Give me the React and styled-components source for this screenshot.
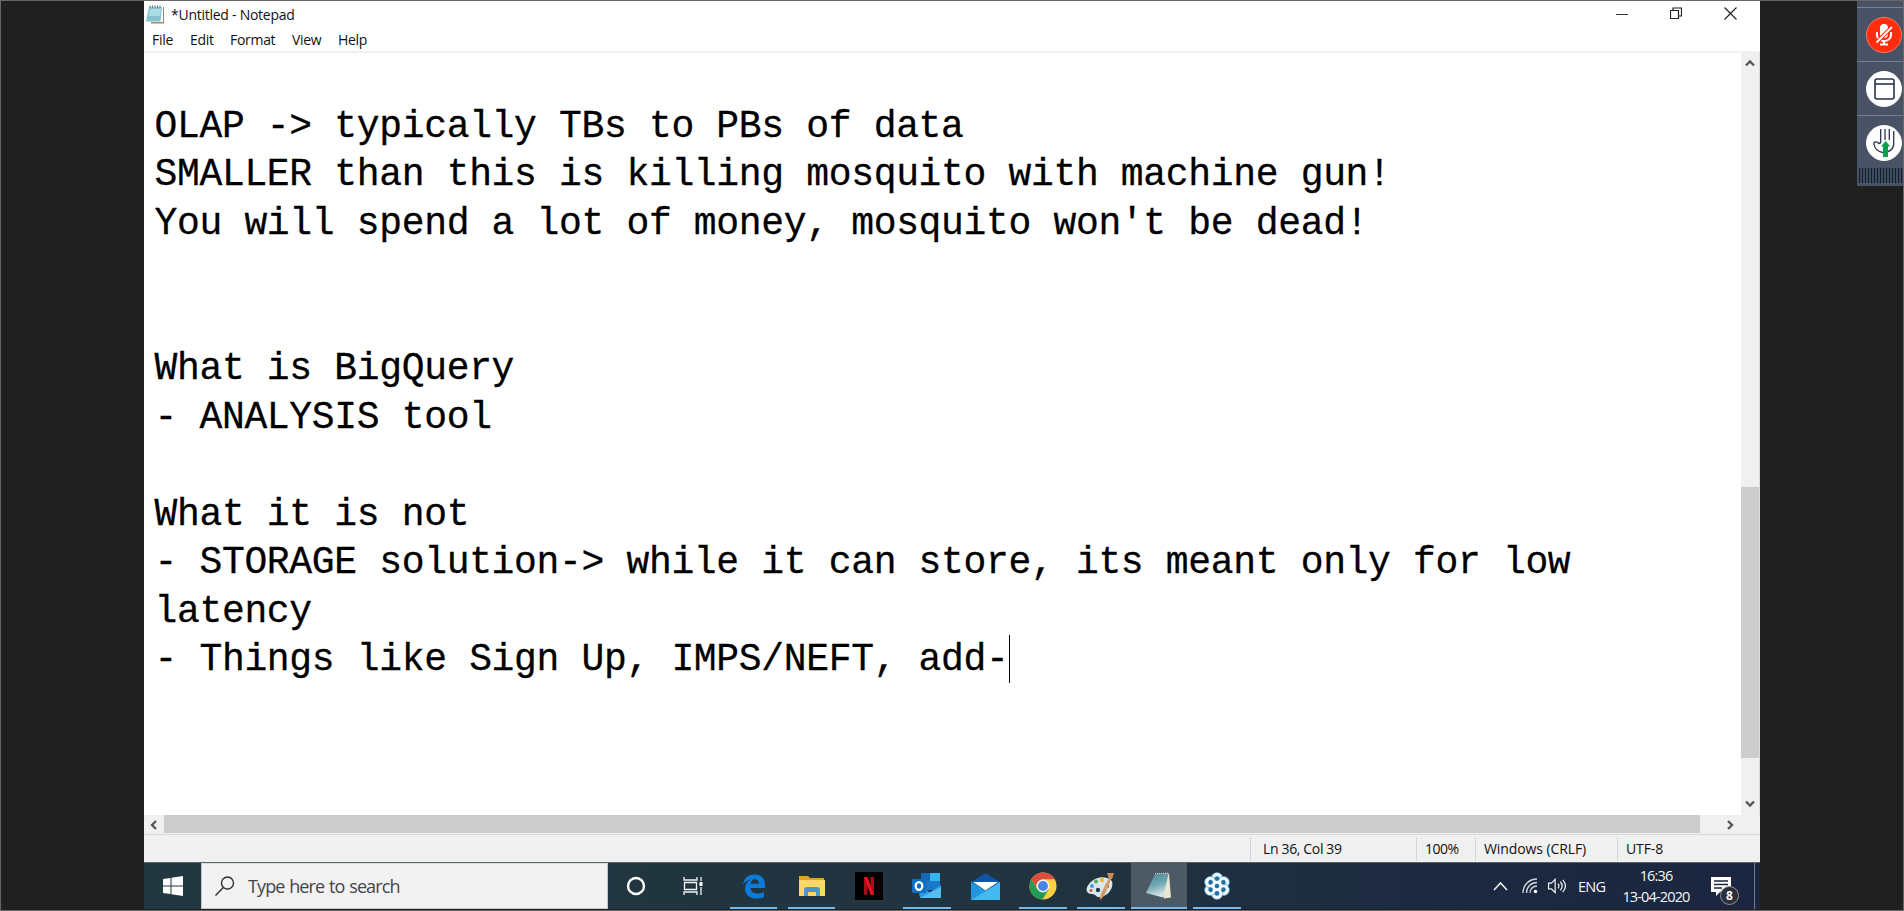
import React from 'react';
import styled, { createGlobalStyle } from 'styled-components';

const Global = createGlobalStyle`
  *{box-sizing:border-box}
  html,body,#root{margin:0;height:100%;overflow:hidden}
  body{background:#202020;font-family:"Open Sans","Noto Sans",sans-serif;color:#111}
`;

const Screen = styled.div`
  position:relative;width:1904px;height:911px;display:flex;justify-content:flex-start;
  padding-left:143px;background:#202020;border:1px solid #666;overflow:hidden;
`;
const Desktop = styled.div`width:1616px;height:908px;display:flex;flex-direction:column;`;
const Notepad = styled.div`height:861px;display:flex;flex-direction:column;background:#fff;`;
const TitleBar = styled.div`height:27px;display:flex;align-items:center;padding-left:2px;font-size:14px;`;
const Title = styled.span`margin-left:6px;letter-spacing:-0.26px;flex:1;white-space:nowrap;`;
const WindowButtons = styled.div`display:flex;gap:42px;padding-right:23px;height:16px;`;
const MenuBar = styled.div`
  height:23px;display:flex;align-items:center;padding:0 0 1px 8px;font-size:14px;
`;
const MenuItem = styled.span`width:${p => p.$w}px;letter-spacing:-0.3px;white-space:nowrap;`;
const Editor = styled.div`height:764px;display:flex;border-top:2px solid #eef0f3;`;
const TextArea = styled.div`
  flex:1;padding:50px 0 0 10.5px;white-space:pre;
  font-family:"Liberation Mono",monospace;font-size:38px;line-height:48.46px;letter-spacing:-0.33px;
  color:#000;-webkit-text-stroke:0.3px #000;
`;
const Line = styled.div`height:48.46px;display:flex;`;
const Caret = styled.i`width:1px;height:48px;margin-top:-1px;background:#000;`;
const VScroll = styled.div`
  width:19px;background:#f0f0f0;display:flex;flex-direction:column;align-items:center;
  padding:5px 0 6px;border-right:1px solid #dcdcdc;
`;
const VThumb = styled.div`width:18px;height:271px;margin:419px 0 auto;background:#cdcdcd;`;
const HScroll = styled.div`height:20px;background:#f0f0f0;display:flex;align-items:center;border-bottom:1px solid #d7d7d7;`;
const HThumb = styled.div`width:1536px;height:18px;background:#cdcdcd;margin:0 25px 1px 5px;`;
const ArrowPad = styled.div`width:15px;padding-left:5px;display:flex;`;
const StatusBar = styled.div`height:27px;background:#f0f0f0;display:flex;justify-content:flex-end;font-size:14px;`;
const StatusCell = styled.div`
  width:${p => p.$w}px;padding-left:${p => p.$pad}px;margin-top:2px;height:24px;line-height:23px;
  border-left:1px solid #d5d5d5;letter-spacing:${p => p.$ls}px;white-space:nowrap;
`;
const Taskbar = styled.div`
  height:47px;display:flex;background:linear-gradient(90deg,#213841,#21333f 58%,#1d2b40 75%,#1b2540);
  border-top:1px solid #56666c;
`;
const Start = styled.div`width:57px;display:flex;align-items:center;justify-content:center;`;
const Search = styled.div`
  width:407px;background:#f2f2f2;border:1px solid #c6c6c6;border-top-color:#ddd;display:flex;align-items:center;padding-left:13px;
  font-size:18px;letter-spacing:-0.9px;word-spacing:1px;color:#454545;gap:13px;white-space:nowrap;
`;
const Apps = styled.div`display:flex;`;
const AppButton = styled.div`
  width:${p => p.$w || 58}px;height:46px;display:flex;align-items:center;justify-content:center;
  background:${p => (p.$active ? '#4c5a66' : 'transparent')};
  box-shadow:${p => (p.$open ? 'inset 0 -2px #76b9ed' : 'none')};
  svg{display:block}
`;
const Tray = styled.div`margin-left:auto;display:flex;align-items:center;color:#f4f6f8;`;
const TrayIcon = styled.div`width:${p => p.$w}px;display:flex;`;
const Lang = styled.span`width:36px;font-size:14.5px;letter-spacing:-0.7px;`;
const Clock = styled.div`
  width:84px;margin-right:13px;display:flex;flex-direction:column;align-items:center;line-height:21px;
  font-size:14.5px;letter-spacing:-0.85px;white-space:nowrap;
`;
const Notice = styled.div`width:43px;position:relative;display:flex;`;
const Badge = styled.b`
  position:absolute;left:9px;top:9px;width:19px;height:19px;border-radius:50%;background:#2b3038;border:1px solid #8b9098;
  font-size:12px;line-height:17px;text-align:center;
`;
const ShowDesk = styled.div`width:6px;height:46px;border-left:1px solid #75808f;`;
const Panel = styled.div`
  position:absolute;right:-1px;top:-1px;width:47px;height:186px;background:#4a5266;display:flex;flex-direction:column;
  padding-top:7px;
`;
const PanelCell = styled.div`height:54px;border-top:1px solid #738099;padding:9px 0 0 9px;`;
const Round = styled.div`
  width:36px;height:36px;border-radius:50%;background:${p => p.$bg || '#fff'};
  border:1px solid ${p => p.$edge || '#fff'};display:flex;align-items:center;justify-content:center;
  svg{flex:none}
`;
const Grip = styled.div`height:15px;margin:-1px 1px 0 2px;background:repeating-linear-gradient(90deg,#111d2b 0 1px,#3f4c60 1px 3px);`;

const Chevron = ({ d }) => (
  <svg width="10" height="10" viewBox="0 0 10 10"><path d={d} fill="none" stroke="#555" strokeWidth="2.3" /></svg>
);

const PadIcon = () => (
  <svg width="19" height="20" viewBox="0 0 19 20">
    <path d="M4 2h14v16.500H5z" fill="#9b8a72" /><path d="M4 2h13v15H3z" fill="#fff" />
    <path d="M3 2h13l-1.500 14.500H0z" fill="#86c3d0" /><path d="M4 4h11l-1 7H3z" fill="#a9dce3" />
    <path d="M4 2.500V.5M6.500 2.500V.5M9 2.500V.5M11.500 2.500V.5M14 2.500V.5" stroke="#54666c" />
  </svg>
);

const Edge = () => (
  <svg width="24" height="25" viewBox="0 0 24 25">
    <path d="M1 11C2 4 6 .5 12.500.5 19.500.5 23 5 23 11v3H8.500c.3 4 3.500 5.600 7 5.600 2.600 0 4.700-.7 6.500-1.700v5c-2 1.100-4.700 1.700-7.500 1.700C7.500 24.600 3 20.500 3 14.500c0-4 2-7 5.500-8.700C4.500 6.500 2 8.500 1 11zM8.700 9.800H17C17 7 15.500 5.200 12.900 5.200c-2.400 0-4 1.700-4.200 4.600z" fill="#0a7bdb" />
  </svg>
);
const Folder = () => (
  <svg width="26" height="22" viewBox="0 0 26 22">
    <path d="M0 1h9l2 2h14v5H0z" fill="#e3a32a" /><path d="M1 5h25v16H0V6z" fill="#fbd866" />
    <path d="M5 21v-6q0-3 3-3h10q3 0 3 3v6h-4v-4H9v4z" fill="#4d96c9" />
  </svg>
);
const Netflix = () => (
  <svg width="28" height="28" viewBox="0 0 28 28">
    <rect width="28" height="28" fill="#000" /><path d="M9 5h3.500v17.500L9 23zM15.500 5H19v18l-3.500-.5z" fill="#a80c16" />
    <path d="M9 5h3.500L19 23l-3.500-.5z" fill="#e51420" />
  </svg>
);
const Outlook = () => (
  <svg width="30" height="28" viewBox="0 0 30 28">
    <path d="M9 1h19v17H9z" fill="#1779c9" /><path d="M9 1h9v8H9z" fill="#1467b3" /><path d="M18 1h10v8H18z" fill="#36b4ee" />
    <path d="M6 14l12 6 11-7v13H8z" fill="#2a9be0" /><path d="M8 26l21-11v11z" fill="#55bdf0" />
    <rect y="7" width="14" height="14" rx="1" fill="#0c6fc4" /><ellipse cx="7" cy="14" rx="3.300" ry="3.900" fill="none" stroke="#fff" strokeWidth="2.300" />
  </svg>
);
const Mail = () => (
  <svg width="29" height="27" viewBox="0 0 29 27">
    <path d="M0 9L14.500 0 29 9v5H0z" fill="#1055a3" />
    <path d="M0 9l29 18H0z" fill="#2d9ee5" /><path d="M29 9v18H0z" fill="#43b9f2" /><path d="M0 9l14.500 9L0 27z" fill="#2196dc" /><path d="M2 9h25l-12.500 8.500z" fill="#fff" />
  </svg>
);
const Chrome = () => (
  <svg width="28" height="28" viewBox="0 0 28 28">
    <circle cx="14" cy="14" r="13.500" fill="#fdd046" />
    <path d="M2.300 7.200A13.500 13.500 0 0 1 25.700 7.300H14a6.700 6.700 0 0 0-5.800 10z" fill="#dd4c40" />
    <path d="M2.300 7.200A13.500 13.500 0 0 0 13.500 27.500l6.300-10.200H8.200z" fill="#239b57" />
    <circle cx="14" cy="14" r="6.400" fill="#f1f1f1" /><circle cx="14" cy="14" r="4.900" fill="#4685e8" />
  </svg>
);
const Paint = () => (
  <svg width="30" height="28" viewBox="0 0 30 28">
    <path d="M3 12C8 5 19 3 25 8c4 5-1 15-10 17-5 1-5-3-9-3-6 0-7-5-3-10z" fill="#dae7ee" />
    <circle cx="6" cy="14" r="2" fill="#4b9ed4" /><circle cx="10" cy="9.500" r="2" fill="#55aa54" /><circle cx="16" cy="8" r="2.200" fill="#edbd35" />
    <circle cx="21" cy="14" r="2.200" fill="#d75545" /><circle cx="12" cy="18" r="2.200" fill="#253746" /><circle cx="5" cy="18.500" r="1.600" fill="#d75545" />
    <path d="M14 28c0-7 3-10 9-22l2 1c-5 13-6 17-11 21z" fill="#d49b65" /><path d="M21 1l7 0-2 6-3 0z" fill="#c98d59" />
  </svg>
);
const TaskPad = () => (
  <svg width="28" height="28" viewBox="0 0 28 28">
    <defs>
      <linearGradient id="pad" x1="0" y1="0" x2="0.3" y2="1"><stop offset="0" stopColor="#4e8993" /><stop offset=".55" stopColor="#6fa9b2" /><stop offset="1" stopColor="#d5e3e3" /></linearGradient>
    </defs>
    <path d="M10 2l14-.5 2 24-7 1z" fill="#e9e5d4" /><path d="M10 2l13.500 0-5.500 23.500L1 21z" fill="url(#pad)" />
    <path d="M10 1.700l14-.5" stroke="#ddd" strokeDasharray="1 1" />
  </svg>
);
const petals = [0, 60, 120, 180, 240, 300];
const Flower = () => (
  <svg width="28" height="28" viewBox="0 0 28 28">
    {petals.map(a => <circle key={a} cx="14" cy="6.300" r="5.700" fill="#f2fbff" stroke="#3e9ecb" strokeWidth=".6" transform={`rotate(${a} 14 14)`} />)}
    <circle cx="14" cy="14" r="7" fill="#f2fbff" />
    {petals.map(a => <ellipse key={a} cx="14" cy="6.600" rx="2.400" ry="2.300" fill="#27719f" transform={`rotate(${a} 14 14)`} />)}
    <circle cx="14" cy="14" r="2.300" fill="#27719f" />
  </svg>
);

const lines = [
  'OLAP -> typically TBs to PBs of data',
  'SMALLER than this is killing mosquito with machine gun!',
  "You will spend a lot of money, mosquito won't be dead!",
  '', '',
  'What is BigQuery',
  '- ANALYSIS tool',
  '',
  'What it is not',
  '- STORAGE solution-> while it can store, its meant only for low',
  'latency',
  '- Things like Sign Up, IMPS/NEFT, add-',
];

export default function App() {
  return (
    <>
      <Global />
      <Screen>
        <Desktop>
          <Notepad>
            <TitleBar>
              <PadIcon />
              <Title>*Untitled - Notepad</Title>
              <WindowButtons>
                <svg width="12" height="13"><path d="M0 7.500h12" stroke="#333" /></svg>
                <svg width="12" height="13"><path d="M.5 3.500h8v8h-8zM3 3V1h8.500v8H9" fill="none" stroke="#222" strokeWidth="1.200" /></svg>
                <svg width="13" height="13"><path d="M.5.500l12 12M12.500.500l-12 12" stroke="#222" strokeWidth="1.200" /></svg>
              </WindowButtons>
            </TitleBar>
            <MenuBar>
              <MenuItem $w={38}>File</MenuItem>
              <MenuItem $w={40}>Edit</MenuItem>
              <MenuItem $w={62}>Format</MenuItem>
              <MenuItem $w={46}>View</MenuItem>
              <MenuItem $w={40}>Help</MenuItem>
            </MenuBar>
            <Editor>
              <TextArea>
                {lines.map((t, i) => <Line key={i}>{t}{i === lines.length - 1 && <Caret />}</Line>)}
              </TextArea>
              <VScroll>
                <Chevron d="M1 7.500L5 3.500 9 7.500" />
                <VThumb />
                <Chevron d="M1 2.500L5 6.500 9 2.500" />
              </VScroll>
            </Editor>
            <HScroll>
              <ArrowPad><Chevron d="M7 1L3 5 7 9" /></ArrowPad>
              <HThumb />
              <Chevron d="M3 1L7 5 3 9" />
            </HScroll>
            <StatusBar>
              <StatusCell $w={166} $pad={12} $ls={-0.35}>Ln 36, Col 39</StatusCell>
              <StatusCell $w={59} $pad={8} $ls={-0.5}>100%</StatusCell>
              <StatusCell $w={142} $pad={8} $ls={-0.1}>Windows (CRLF)</StatusCell>
              <StatusCell $w={143} $pad={8} $ls={-0.1}>UTF-8</StatusCell>
            </StatusBar>
          </Notepad>
          <Taskbar>
            <Start>
              <svg width="20" height="20" viewBox="0 0 20 20"><path d="M0 3l7.500-1v7.500H0zM8.500 1.800L20 0v9.500H8.500zM0 10.500h7.500V18L0 17zM8.500 10.500H20V20L8.500 18.200z" fill="#fff" /></svg>
            </Start>
            <Search>
              <svg width="20" height="20" viewBox="0 0 20 20"><circle cx="12.500" cy="7" r="6" fill="none" stroke="#333" strokeWidth="1.400" /><path d="M8.300 11.500L.5 19.500" stroke="#333" strokeWidth="1.500" /></svg>
              Type here to search
            </Search>
            <Apps>
              <AppButton $w={56}><svg width="20" height="20"><circle cx="10" cy="10" r="8" fill="none" stroke="#fff" strokeWidth="2.400" /></svg></AppButton>
              <AppButton $w={58}>
                <svg width="20" height="20" fill="none" stroke="#f2f4f5" strokeWidth="1.300"><path d="M1 1v3h13V1M1 19v-3h13v3M1.500 6.500h12v7h-12zM18 1v4M18 11v8" /><path d="M16.500 6h3v4h-3z" fill="#fff" stroke="none" /></svg>
              </AppButton>
              <AppButton $w={8} />
              <AppButton $w={47} $open><Edge /></AppButton>
              <AppButton $w={11} />
              <AppButton $w={47} $open><Folder /></AppButton>
              <AppButton $w={68}><Netflix /></AppButton>
              <AppButton $w={48} $open><Outlook /></AppButton>
              <AppButton $w={68}><Mail /></AppButton>
              <AppButton $w={48} $open><Chrome /></AppButton>
              <AppButton $w={10} />
              <AppButton $w={48} $open><Paint /></AppButton>
              <AppButton $w={6} />
              <AppButton $w={56} $open $active><TaskPad /></AppButton>
              <AppButton $w={6} />
              <AppButton $w={48} $open><Flower /></AppButton>
            </Apps>
            <Tray>
              <TrayIcon $w={29}><svg width="15" height="10"><path d="M1 9L7.500 2 14 9" fill="none" stroke="#eee" strokeWidth="1.600" /></svg></TrayIcon>
              <TrayIcon $w={25}>
                <svg width="16" height="16" fill="none" stroke="#cfd6dd" strokeWidth="1.300"><path d="M1 15C1 7 7 1 15 1M4.500 15C4.500 9 9 4.500 15 4.500M8 15c0-4 3-7 7-7" /><circle cx="13.500" cy="13.500" r="1.800" fill="#fff" stroke="none" /></svg>
              </TrayIcon>
              <TrayIcon $w={31}>
                <svg width="21" height="16" viewBox="0 0 21 17" fill="none" stroke="#eef1f4" strokeWidth="1.300"><path d="M1 5.500h3l4-4v14l-4-4H1zM11 6q2 2.500 0 5M13.500 4q4 4.500 0 9M16 2q6 6.500 0 13" /></svg>
              </TrayIcon>
              <Lang>ENG</Lang>
              <Clock><span>16:36</span><span>13-04-2020</span></Clock>
              <Notice>
                <svg width="20" height="19" viewBox="0 0 20 19"><path d="M0 0h20v15H9l-4 4v-4H0z" fill="#fff" /><path d="M3 4h14M3 7.500h14M3 11h8" stroke="#1b2740" strokeWidth="1.300" /></svg>
                <Badge>8</Badge>
              </Notice>
              <ShowDesk />
            </Tray>
          </Taskbar>
        </Desktop>
        <Panel>
          <PanelCell>
            <Round $bg="#ff2d0d" $edge="#ff7656">
              <svg width="18" height="24" viewBox="0 0 18 24" fill="none" stroke="#fff">
                <rect x="5" y="1" width="8" height="14" rx="4" fill="#fff" stroke="none" />
                <path d="M2 9v3a7 6 0 0 0 14 0V9M9 18v3M5 21.500h8" strokeWidth="2" />
                <path d="M1 20L17 4" stroke="#ff2d0d" strokeWidth="4" /><path d="M1.500 19.500L17 4" strokeWidth="1.800" />
              </svg>
            </Round>
          </PanelCell>
          <PanelCell>
            <Round>
              <svg width="21" height="22" fill="none" stroke="#28334a" strokeWidth="1.600"><rect x="1" y="1" width="19" height="20" rx="2" /><path d="M1 6h19" /></svg>
            </Round>
          </PanelCell>
          <PanelCell>
            <Round>
              <svg width="22" height="30" viewBox="0 0 22 30" fill="none" stroke="#28334a" strokeWidth="1.300">
                <path d="M7.700 1v13.500q-2 2-2.500 0Q1 13 .8 15.500 2 23.500 10 24.500q9 0 10.700-7.500V3M12 1v11M16.300 1v11" />
                <path d="M12.600 13L8 18.500h2V29h5V18.500h2.300z" fill="#0aa04c" stroke="none" />
              </svg>
            </Round>
          </PanelCell>
          <Grip />
        </Panel>
      </Screen>
    </>
  );
}
